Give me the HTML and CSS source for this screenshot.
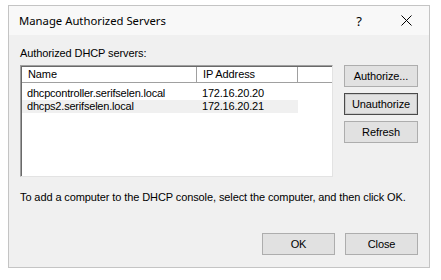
FILE: index.html
```html
<!DOCTYPE html>
<html>
<head>
<meta charset="utf-8">
<link rel="stylesheet" href="styles.css">
</head>
<body>
<div class="dialog">
  <div class="titlebar">
    <span class="title">Manage Authorized Servers</span>
    <span class="help">?</span>
    <span class="close">
      <svg width="11" height="11" viewBox="0 0 11 11"><path d="M0.5 0.5L10.5 10.5M10.5 0.5L0.5 10.5" stroke="#000" stroke-width="1" fill="none"/></svg>
    </span>
  </div>
  <div class="body">
    <div class="label">Authorized DHCP servers:</div>
    <div class="main">
      <div class="list">
        <div class="header">
          <div class="hcell c1">Name</div>
          <div class="hcell c2">IP Address</div>
          <div class="hcell c3"></div>
        </div>
        <div class="row first"><span class="c1">dhcpcontroller.serifselen.local</span><span class="c2">172.16.20.20</span></div>
        <div class="row sel"><span class="c1">dhcps2.serifselen.local</span><span class="c2">172.16.20.21</span></div>
      </div>
      <div class="side">
        <button class="btn">Authorize...</button>
        <button class="btn focus">Unauthorize</button>
        <button class="btn">Refresh</button>
      </div>
    </div>
    <div class="hint">To add a computer to the DHCP console, select the computer, and then click OK.</div>
    <div class="footer">
      <button class="btn wide">OK</button>
      <button class="btn wide">Close</button>
    </div>
  </div>
</div>
</body>
</html>
```

FILE: styles.css
```css
html, body {
  margin: 0;
  padding: 0;
  background: #ffffff;
}
body {
  font-family: "Liberation Sans", Arial, sans-serif;
  font-size: 11px;
  letter-spacing: -0.1px;
  color: #000;
}
.dialog {
  margin: 5px 0 0 8px;
  width: 420px;
  height: 261px;
  border: 1px solid #c4c4c4;
  background: #f0f0f0;
  display: flex;
  flex-direction: column;
}
.titlebar {
  height: 29px;
  background: #f8f8f8;
  display: flex;
  align-items: center;
  padding-left: 10px;
  flex: none;
}
.title {
  font-family: "Noto Sans", "Liberation Sans", sans-serif;
  font-size: 11.3px;
  letter-spacing: 0;
  flex: 1;
  padding-bottom: 1px;
}
.help {
  font-family: "Noto Sans", "Liberation Sans", sans-serif;
  font-size: 13px;
  width: 46px;
  text-align: center;
  margin-right: 1px;
}
.close {
  width: 46px;
  display: flex;
  justify-content: center;
  align-items: center;
}
.body {
  padding: 12px 11px 0 11px;
  display: flex;
  flex-direction: column;
}
.label {
  height: 13px;
  line-height: 13px;
  margin-bottom: 5px;
}
.main {
  display: flex;
  gap: 11px;
}
.list {
  width: 313px;
  height: 112px;
  box-sizing: border-box;
  background: #fff;
  border-top: 1px solid #a0a0a0;
  border-left: 1px solid #a0a0a0;
  border-right: 1px solid #e3e3e3;
  border-bottom: 1px solid #e3e3e3;
  box-shadow: inset 1px 1px 0 #696969;
}
.header {
  display: flex;
  height: 15px;
  margin: 1px 0 0 1px;
  border-bottom: 1px solid #a0a0a0;
}
.hcell {
  line-height: 15px;
  padding-left: 6px;
  box-sizing: border-box;
  border-right: 1px solid #a0a0a0;
}
.hcell.c2 { box-shadow: inset 1px 0 0 #fff; }
.c1 { width: 175px; box-sizing: border-box; }
.c2 { width: 101px; box-sizing: border-box; }
.c3 { width: 34px; border-right: none; box-shadow: inset 1px 0 0 #fff; }
.row {
  display: flex;
  height: 13px;
  line-height: 13px;
  margin-left: 1px;
  width: 276px;
}
.row.first { margin-top: 4px; }
.row span {
  padding-left: 5px;
  white-space: nowrap;
  letter-spacing: -0.2px;
}
.row.sel { background: #f0f0f0; }
.side {
  display: flex;
  flex-direction: column;
  gap: 6px;
}
.btn {
  font-family: "Liberation Sans", Arial, sans-serif;
  font-size: 11px;
  letter-spacing: -0.1px;
  width: 74px;
  height: 22px;
  background: #e1e1e1;
  border: 1px solid #adadad;
  padding: 0;
  margin: 0;
  color: #000;
}
.btn.focus {
  border: 1px solid #4a4a4a;
  box-shadow: inset 0 0 0 1px #c8c8c8;
}
.hint {
  margin-top: 14px;
  height: 13px;
  line-height: 13px;
}
.footer {
  margin-top: 29px;
  display: flex;
  justify-content: flex-end;
  gap: 10px;
}
.btn.wide { width: 73px; height: 22px; }
```
